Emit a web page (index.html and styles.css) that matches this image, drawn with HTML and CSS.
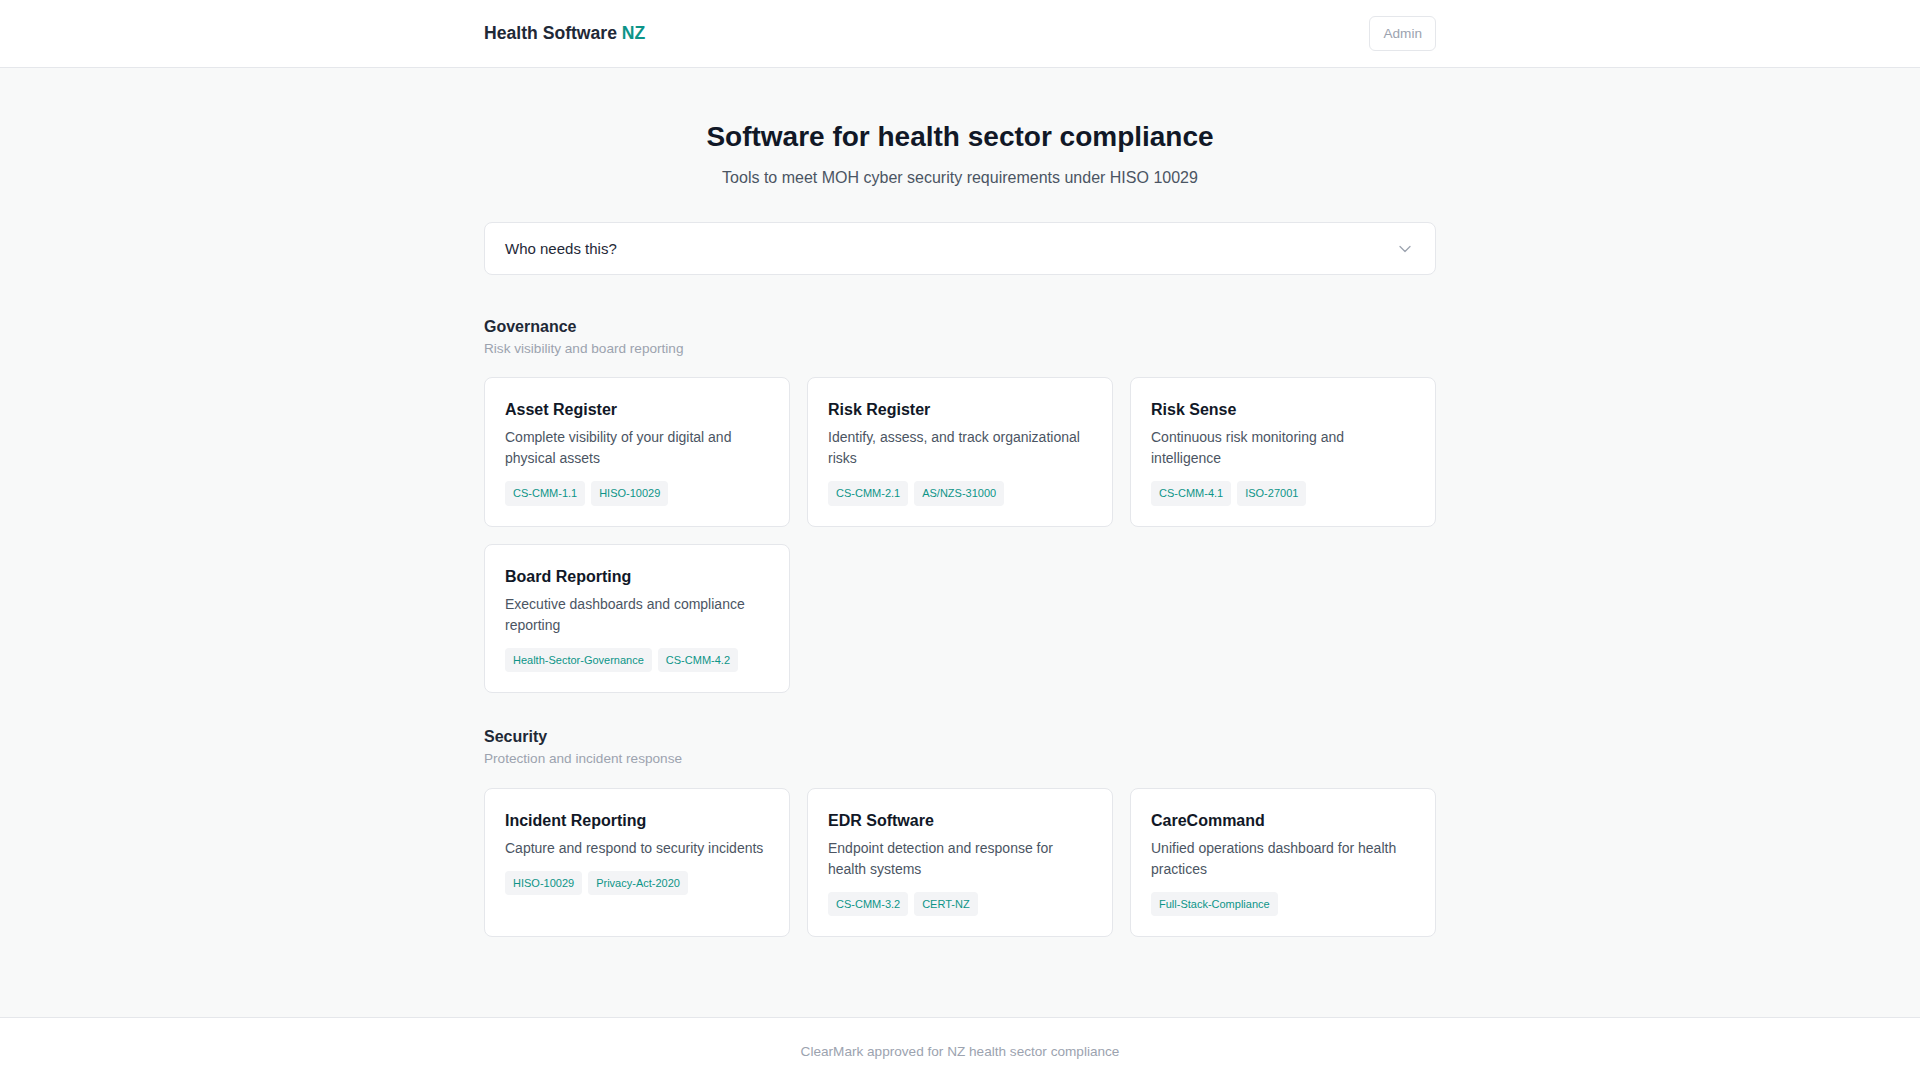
FILE: index.html
```
<!DOCTYPE html>
<html>
  <head>
    <link rel="stylesheet" href="styles.css">
  </head>
  <body>
    <header class="site-header">
      <div class="container header-inner">
        <a class="brand" href="#">Health Software <span>NZ</span></a>
        <button class="admin-btn">Admin</button>
      </div>
    </header>

    <main class="container main">
      <div class="hero">
        <h1>Software for health sector compliance</h1>
        <p>Tools to meet MOH cyber security requirements under HISO 10029</p>
      </div>

      <details class="who">
        <summary>
          <span>Who needs this?</span>
          <svg width="20" height="20" viewBox="0 0 24 24" fill="none" stroke="currentColor" stroke-width="1.5" stroke-linecap="round" stroke-linejoin="round"><path d="m6 9 6 6 6-6"/></svg>
        </summary>
        <p>Any New Zealand health provider that handles patient information.</p>
      </details>

      <section class="category">
        <h2>Governance</h2>
        <p class="category-sub">Risk visibility and board reporting</p>
        <div class="card-grid">
          <div class="card">
            <h3>Asset Register</h3>
            <p>Complete visibility of your digital and physical assets</p>
            <div class="tags"><span>CS-CMM-1.1</span><span>HISO-10029</span></div>
          </div>
          <div class="card">
            <h3>Risk Register</h3>
            <p>Identify, assess, and track organizational risks</p>
            <div class="tags"><span>CS-CMM-2.1</span><span>AS/NZS-31000</span></div>
          </div>
          <div class="card">
            <h3>Risk Sense</h3>
            <p>Continuous risk monitoring and intelligence</p>
            <div class="tags"><span>CS-CMM-4.1</span><span>ISO-27001</span></div>
          </div>
          <div class="card">
            <h3>Board Reporting</h3>
            <p>Executive dashboards and compliance reporting</p>
            <div class="tags"><span>Health-Sector-Governance</span><span>CS-CMM-4.2</span></div>
          </div>
        </div>
      </section>

      <section class="category">
        <h2>Security</h2>
        <p class="category-sub">Protection and incident response</p>
        <div class="card-grid">
          <div class="card">
            <h3>Incident Reporting</h3>
            <p>Capture and respond to security incidents</p>
            <div class="tags"><span>HISO-10029</span><span>Privacy-Act-2020</span></div>
          </div>
          <div class="card">
            <h3>EDR Software</h3>
            <p>Endpoint detection and response for health systems</p>
            <div class="tags"><span>CS-CMM-3.2</span><span>CERT-NZ</span></div>
          </div>
          <div class="card">
            <h3>CareCommand</h3>
            <p>Unified operations dashboard for health practices</p>
            <div class="tags"><span>Full-Stack-Compliance</span></div>
          </div>
        </div>
      </section>
    </main>

    <footer class="site-footer">
      <p>ClearMark approved for NZ health sector compliance</p>
    </footer>
  </body>
</html>
```

FILE: styles.css
```
* {
  margin: 0;
  padding: 0;
  box-sizing: border-box;
}
body {
  background-color: #f8f9f9;
  font-family: "Liberation Sans", Arial, sans-serif;
  color: #111827;
}
.container {
  max-width: 1000px;
  margin: 0 auto;
  padding-left: 24px;
  padding-right: 24px;
}
.site-header {
  background-color: white;
  border-bottom: 1px solid #e5e7eb;
}
.header-inner {
  display: flex;
  justify-content: space-between;
  align-items: center;
  padding-top: 16px;
  padding-bottom: 16px;
}
.brand {
  font-size: 1.1rem;
  font-weight: bold;
  color: #1f2937;
  text-decoration: none;
}
.brand span {
  color: #0d9488;
}
.admin-btn {
  font-family: inherit;
  font-size: 0.85rem;
  line-height: 21px;
  color: #9ca3af;
  background: white;
  border: 1px solid #e5e7eb;
  border-radius: 6px;
  padding: 6px 13px;
  cursor: pointer;
}
.main {
  padding-top: 51px;
  padding-bottom: 80px;
}
.hero {
  text-align: center;
}
.hero h1 {
  font-size: 28px;
  line-height: 1.25;
  margin-bottom: 12px;
}
.hero p {
  font-size: 16px;
  line-height: 1.5;
  color: #4b5563;
}
.who {
  margin-top: 32px;
  margin-bottom: 40px;
  background-color: white;
  border: 1px solid #e5e7eb;
  border-radius: 8px;
}
.who summary {
  list-style: none;
  display: flex;
  justify-content: space-between;
  align-items: center;
  padding: 15px 20px;
  font-size: 15px;
  line-height: 21px;
  color: #1f2937;
  cursor: pointer;
}
.who summary::-webkit-details-marker {
  display: none;
}
.who summary svg {
  color: #9ca3af;
}
.who p {
  padding: 0 20px 16px;
  font-size: 14px;
  color: #4b5563;
}
.category {
  margin-bottom: 32px;
}
.category:last-child {
  margin-bottom: 0;
}
.category h2 {
  font-size: 16px;
  line-height: 1.5;
  color: #1f2937;
}
.category-sub {
  font-size: 0.85rem;
  line-height: 1.5;
  color: #9ca3af;
  margin-bottom: 18px;
}
.card-grid {
  display: grid;
  grid-template-columns: repeat(3, 1fr);
  gap: 17px;
}
.card {
  background-color: white;
  border: 1px solid #e5e7eb;
  border-radius: 8px;
  padding: 20px;
}
.card h3 {
  font-size: 16px;
  line-height: 1.5;
  color: #111827;
  margin-bottom: 5px;
}
.card p {
  font-size: 14px;
  line-height: 1.5;
  color: #4b5563;
  margin-bottom: 12px;
}
.tags {
  display: flex;
  flex-wrap: wrap;
  gap: 6px;
}
.tags span {
  font-size: 11px;
  line-height: 1.5;
  padding: 4px 8px;
  border-radius: 4px;
  background-color: #f3f4f6;
  color: #0d9488;
}
.site-footer {
  background-color: white;
  border-top: 1px solid #e5e7eb;
  padding: 24px 0;
  text-align: center;
}
.site-footer p {
  font-size: 0.85rem;
  line-height: 1.5;
  color: #9ca3af;
}
```
